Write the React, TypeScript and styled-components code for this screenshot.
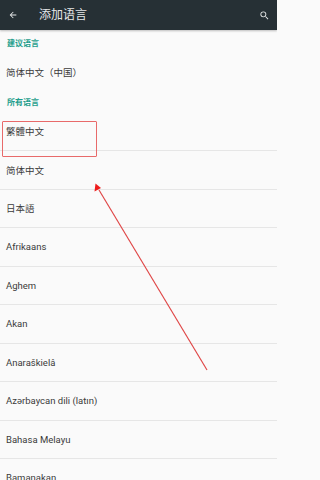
import React from "react";
import styled, { createGlobalStyle } from "styled-components";

const GlobalStyle = createGlobalStyle`
  html, body {
    margin: 0;
    padding: 0;
    background: #fafafa;
  }
  body {
    font-family: Roboto, "Noto Sans CJK SC", "Noto Sans", sans-serif;
  }
`;

const suggested = ["简体中文（中国）"];
const allLanguages = [
  "繁體中文",
  "简体中文",
  "日本語",
  "Afrikaans",
  "Aghem",
  "Akan",
  "Anaraškielâ",
  "Azərbaycan dili (latın)",
  "Bahasa Melayu",
  "Bamanakan",
];

const App = () => {
  return (
    <Screen>
      <GlobalStyle />
      <Toolbar>
        <IconButton aria-label="back">
          <svg width="10" height="10" viewBox="0 0 24 24">
            <path
              d="M20 11H7.83l5.59-5.59L12 4l-8 8 8 8 1.41-1.41L7.83 13H20v-2z"
              fill="#e8eaeb"
            />
          </svg>
        </IconButton>
        <Title>添加语言</Title>
        <IconButton aria-label="search">
          <svg width="11" height="11" viewBox="0 0 24 24">
            <path
              d="M15.5 14h-.79l-.28-.27A6.47 6.47 0 0 0 16 9.5 6.5 6.5 0 1 0 9.5 16c1.61 0 3.09-.59 4.23-1.57l.27.28v.79l5 4.99L20.49 19l-4.99-5zm-6 0C7.01 14 5 11.99 5 9.5S7.01 5 9.5 5 14 7.01 14 9.5 11.99 14 9.5 14z"
              fill="#e8eaeb"
            />
          </svg>
        </IconButton>
      </Toolbar>

      <List>
        <SectionLabel height={24}>建议语言</SectionLabel>
        {suggested.map((name) => (
          <Row key={name} height={36} divider={false}>
            {name}
          </Row>
        ))}
        <SectionLabel height={22.5}>所有语言</SectionLabel>
        {allLanguages.map((name) => (
          <Row key={name} height={38.5} divider>
            {name}
          </Row>
        ))}
      </List>

      {/* annotation: highlight box + arrow */}
      <Highlight />
      <ArrowLayer width="277" height="480" viewBox="0 0 277 480">
        <line x1="207" y1="370" x2="99" y2="190" stroke="#e04848" strokeWidth="1.2" />
        <polygon points="95.5,183.5 94.5,191.5 101,188" fill="#ee1c1c" />
      </ArrowLayer>
    </Screen>
  );
};

export default App;

const Screen = styled.div`
  position: relative;
  width: 277px;
  height: 480px;
  overflow: hidden;
  background: #fafafa;
`;

const Toolbar = styled.div`
  height: 30px;
  display: flex;
  align-items: center;
  background: #263035;
  box-shadow: 0 1px 2px rgba(0, 0, 0, 0.25);
  position: relative;
  z-index: 1;
`;

const IconButton = styled.div`
  width: 26px;
  height: 30px;
  display: flex;
  align-items: center;
  justify-content: center;
`;

const Title = styled.div`
  flex: 1;
  margin-left: 13px;
  color: #e6e8e9;
  font-size: 12px;
  line-height: 30px;
`;

const List = styled.div`
  display: flex;
  flex-direction: column;
`;

const SectionLabel = styled.div<{ height: number }>`
  height: ${(p) => p.height}px;
  display: flex;
  align-items: center;
  padding-left: 7px;
  color: #1e9e8c;
  font-size: 8px;
  font-weight: 700;
`;

const Row = styled.div<{ height: number; divider: boolean }>`
  height: ${(p) => p.height}px;
  box-sizing: border-box;
  display: flex;
  align-items: center;
  padding-left: 6px;
  color: #3a3a3a;
  font-size: 9.5px;
  border-bottom: ${(p) => (p.divider ? "1px solid #e6e6e6" : "none")};
  flex-shrink: 0;
`;

const Highlight = styled.div`
  position: absolute;
  left: 2px;
  top: 121px;
  width: 95px;
  height: 36px;
  border: 1px solid #e86a6a;
  border-radius: 1px;
  box-sizing: border-box;
`;

const ArrowLayer = styled.svg`
  position: absolute;
  left: 0;
  top: 0;
  pointer-events: none;
`;
